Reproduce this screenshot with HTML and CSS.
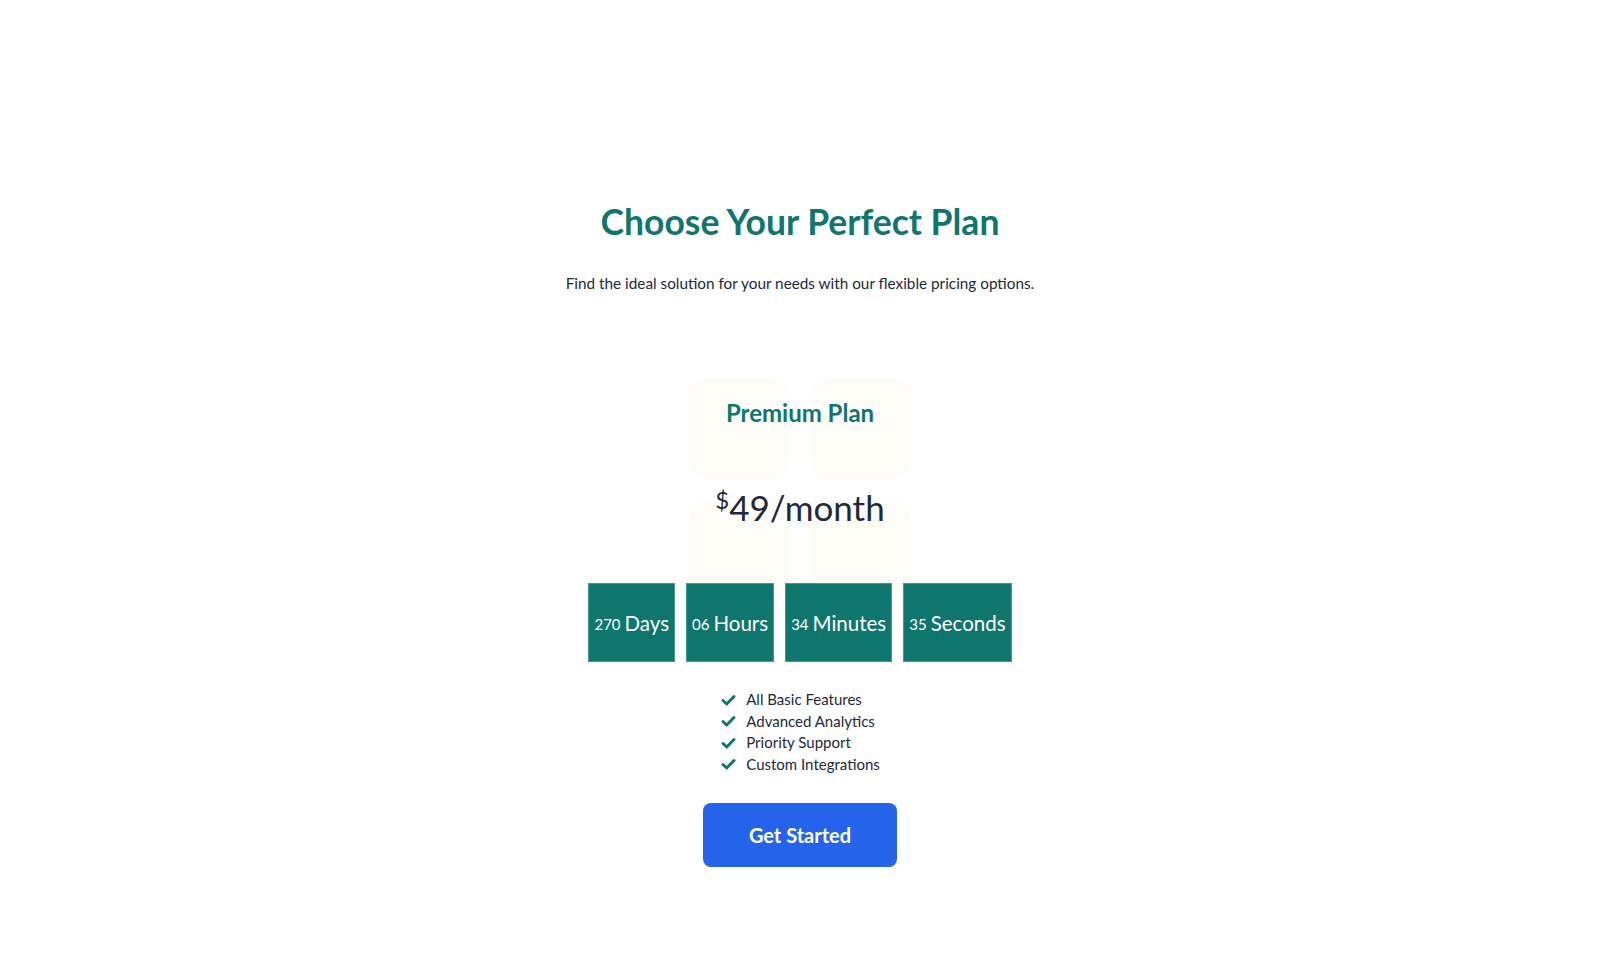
FILE: index.html
```html
<!DOCTYPE html>
<html lang="en">
<head>
<meta charset="utf-8">
<title>Pricing</title>
<link rel="stylesheet" href="styles.css">
</head>
<body>
<main class="page">
  <header class="intro">
    <h1 class="title">Choose Your Perfect Plan</h1>
    <p class="subtitle">Find the ideal solution for your needs with our flexible pricing options.</p>
  </header>
  <section class="plan">
    <div class="decor" aria-hidden="true">
      <span></span><span></span><span></span><span></span>
    </div>
    <h2 class="plan-name">Premium Plan</h2>
    <p class="price"><sup>$</sup>49/month</p>
    <div class="countdown">
      <div class="unit"><span class="num">270</span><span class="lbl">Days</span></div>
      <div class="unit"><span class="num">06</span><span class="lbl">Hours</span></div>
      <div class="unit"><span class="num">34</span><span class="lbl">Minutes</span></div>
      <div class="unit"><span class="num">35</span><span class="lbl">Seconds</span></div>
    </div>
    <ul class="features">
      <li><svg viewBox="0 0 16 16"><polyline points="2.5,8.5 6.2,12 13.5,4.5"/></svg>All Basic Features</li>
      <li><svg viewBox="0 0 16 16"><polyline points="2.5,8.5 6.2,12 13.5,4.5"/></svg>Advanced Analytics</li>
      <li><svg viewBox="0 0 16 16"><polyline points="2.5,8.5 6.2,12 13.5,4.5"/></svg>Priority Support</li>
      <li><svg viewBox="0 0 16 16"><polyline points="2.5,8.5 6.2,12 13.5,4.5"/></svg>Custom Integrations</li>
    </ul>
    <button class="cta" type="button">Get Started</button>
  </section>
</main>
</body>
</html>
```

FILE: styles.css
```css
* { box-sizing: border-box; }
html, body { margin: 0; padding: 0; background: #ffffff; }
body {
  font-family: "Lato", "Noto Sans", sans-serif;
  color: #1e293b;
}
.page {
  display: flex;
  flex-direction: column;
  align-items: center;
  padding-top: 200px;
}
.intro { text-align: center; }
.title {
  margin: 0;
  font-size: 35.5px;
  line-height: 44px;
  font-weight: 700;
  color: #0f766e;
}
.subtitle {
  margin: 28px 0 0;
  font-size: 15.3px;
  line-height: 22px;
  color: #1e293b;
}
.plan {
  position: relative;
  display: flex;
  flex-direction: column;
  align-items: center;
  margin-top: 84px;
  width: 440px;
}
.decor {
  position: absolute;
  top: 0;
  left: 50%;
  transform: translateX(-50%);
  display: grid;
  grid-template-columns: 100px 100px;
  grid-auto-rows: 100px;
  gap: 23px;
  z-index: 0;
}
.decor span {
  background: #fdfcf7;
  border-radius: 20px;
}
.plan > *:not(.decor) { position: relative; z-index: 1; }
.plan-name {
  margin: 20px 0 0;
  font-size: 24px;
  line-height: 30px;
  font-weight: 700;
  color: #0f766e;
}
.price {
  margin: 58px 0 0;
  font-size: 35px;
  line-height: 42px;
  color: #1e293b;
}
.price sup {
  font-size: 24px;
  vertical-align: 0;
  position: relative;
  top: -12px;
}
.countdown {
  display: flex;
  gap: 11px;
  margin-top: 50px;
}
.unit {
  display: flex;
  align-items: center;
  gap: 4px;
  height: 79px;
  padding: 0 5px;
  background: #0f766e;
  border: 1px solid #3f9a92;
  color: #ffffff;
  white-space: nowrap;
}
.num { font-size: 15px; padding-top: 2px; }
.lbl { font-size: 20.5px; }
.features {
  list-style: none;
  margin: 27px 0 0;
  padding: 0;
  font-size: 15px;
  line-height: 21.5px;
}
.features li {
  display: flex;
  align-items: center;
  gap: 9px;
}
.features svg {
  width: 17px;
  height: 16px;
  fill: none;
  stroke: #0f766e;
  stroke-width: 3;
  stroke-linecap: round;
  stroke-linejoin: round;
}
.cta {
  margin-top: 28px;
  width: 194px;
  height: 64px;
  border: none;
  border-radius: 8px;
  background: #2563eb;
  color: #ffffff;
  font-family: inherit;
  font-size: 20px;
  font-weight: 700;
  cursor: pointer;
}
```
